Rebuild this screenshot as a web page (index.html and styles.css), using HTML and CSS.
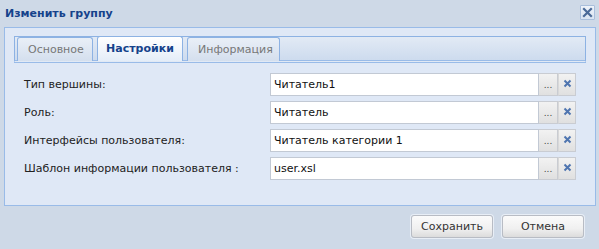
FILE: index.html
```html
<!DOCTYPE html>
<html>
<head>
<meta charset="utf-8">
<link rel="stylesheet" href="styles.css">
</head>
<body>
<div class="window">
  <div class="header">
    <span class="title">Изменить группу</span>
    <span class="close"><svg width="11" height="11" viewBox="0 0 11 11"><path d="M2 2 L9 9 M9 2 L2 9" stroke="#4a6a98" stroke-width="2.2" stroke-linecap="square"/></svg></span>
  </div>
  <div class="panel">
    <div class="tabstrip">
      <div class="tab">Основное</div>
      <div class="tab active">Настройки</div>
      <div class="tab">Информация</div>
    </div>
    <div class="form">
      <div class="row">
        <div class="label">Тип вершины:</div>
        <div class="field"><div class="input">Читатель1</div><div class="trig">...</div><div class="clr"><svg width="9" height="9" viewBox="0 0 9 9"><path d="M1.5 1.5 L7.5 7.5 M7.5 1.5 L1.5 7.5" stroke="#4f75b0" stroke-width="2"/></svg></div></div>
      </div>
      <div class="row">
        <div class="label">Роль:</div>
        <div class="field"><div class="input">Читатель</div><div class="trig">...</div><div class="clr"><svg width="9" height="9" viewBox="0 0 9 9"><path d="M1.5 1.5 L7.5 7.5 M7.5 1.5 L1.5 7.5" stroke="#4f75b0" stroke-width="2"/></svg></div></div>
      </div>
      <div class="row">
        <div class="label">Интерфейсы пользователя:</div>
        <div class="field"><div class="input">Читатель категории 1</div><div class="trig">...</div><div class="clr"><svg width="9" height="9" viewBox="0 0 9 9"><path d="M1.5 1.5 L7.5 7.5 M7.5 1.5 L1.5 7.5" stroke="#4f75b0" stroke-width="2"/></svg></div></div>
      </div>
      <div class="row">
        <div class="label">Шаблон информации пользователя :</div>
        <div class="field"><div class="input">user.xsl</div><div class="trig">...</div><div class="clr"><svg width="9" height="9" viewBox="0 0 9 9"><path d="M1.5 1.5 L7.5 7.5 M7.5 1.5 L1.5 7.5" stroke="#4f75b0" stroke-width="2"/></svg></div></div>
      </div>
    </div>
  </div>
  <div class="footer">
    <button class="btn">Сохранить</button>
    <button class="btn">Отмена</button>
  </div>
</div>
</body>
</html>
```

FILE: styles.css
```css
html, body {
  margin: 0;
  padding: 0;
}
body {
  background: #cfdae7;
  font-family: "DejaVu Sans", Verdana, sans-serif;
  font-size: 11px;
  color: #222;
}
.window {
  width: 599px;
  height: 249px;
  box-sizing: border-box;
  display: flex;
  flex-direction: column;
  background: #ced9e7;
}
.header {
  height: 27px;
  display: flex;
  align-items: center;
  justify-content: space-between;
  padding: 0 4px 0 5px;
  box-sizing: border-box;
}
.title {
  font-weight: bold;
  color: #15428b;
  font-size: 11px;
  margin-top: -1px;
}
.close {
  width: 15px;
  height: 15px;
  box-sizing: border-box;
  border: 1px solid #a9bfdc;
  background: linear-gradient(#eef3fa, #d9e4f2);
  display: flex;
  align-items: center;
  justify-content: center;
  border-radius: 1px;
  margin-top: -2px;
}
.panel {
  margin: 0 3px 0 4px;
  height: 179px;
  box-sizing: border-box;
  border: 1px solid #99bbe8;
  background: #dfe8f6;
  padding: 8px 9px 0 9px;
}
.tabstrip {
  height: 27px;
  box-sizing: border-box;
  border: 1px solid #8db2e3;
  border-bottom: 3px double #99bbe8;
  background: linear-gradient(#e2eaf5, #cddbee);
  display: flex;
  align-items: flex-end;
  padding-left: 2px;
  gap: 4px;
}
.tab {
  height: 24px;
  box-sizing: border-box;
  border: 1px solid #8db2e3;
  border-bottom: none;
  border-radius: 3px 3px 0 0;
  background: linear-gradient(#e9eff7, #d4dfee);
  color: #777;
  padding: 5px 10px 0 10px;
  font-size: 11px;
  margin-bottom: -1px;
}
.tab:first-child { width: 76px; }
.tab.active {
  background: linear-gradient(#ffffff, #e4edf8);
  color: #15428b;
  font-weight: bold;
  height: 25px;
  width: 86px;
  text-align: center;
  padding-left: 0;
  padding-right: 0;
}
.tab:last-child { width: 93px; }
.form {
  padding: 10px 0 0 10px;
  display: flex;
  flex-direction: column;
  gap: 5px;
}
.row {
  display: flex;
  align-items: center;
  height: 23px;
}
.label {
  width: 246px;
  color: #222;
}
.field {
  display: flex;
  height: 23px;
}
.input {
  width: 269px;
  height: 23px;
  box-sizing: border-box;
  border: 1px solid #c2c9d4;
  background: #fff;
  padding: 4px 3px 0 3px;
  color: #111;
}
.trig {
  width: 19px;
  height: 23px;
  box-sizing: border-box;
  border: 1px solid #c9ccd2;
  border-left: none;
  background: linear-gradient(#f2f2f2, #e0e0e0);
  color: #444;
  font-size: 9px;
  text-align: center;
  padding-top: 6px;
}
.clr {
  width: 18px;
  height: 23px;
  box-sizing: border-box;
  border: 1px solid #c9ccd2;
  border-left: 1px solid #d8d8d8;
  background: linear-gradient(#f2f2f2, #e0e0e0);
  display: flex;
  align-items: flex-start;
  justify-content: center;
  padding-top: 5px;
}
.footer {
  flex: 1;
  display: flex;
  justify-content: flex-end;
  align-items: flex-start;
  padding: 9px 15px 0 0;
  gap: 9px;
}
.btn {
  width: 82px;
  height: 23px;
  box-sizing: border-box;
  border: 1px solid #b8bcc4;
  border-radius: 3px;
  background: linear-gradient(#fbfbfb 0%, #f0f0f0 60%, #dcdcdc 100%);
  font-family: "DejaVu Sans", Verdana, sans-serif;
  font-size: 11px;
  color: #333;
  padding: 0;
  box-shadow: 0 0 0 1px #e8eef6;
}
```
